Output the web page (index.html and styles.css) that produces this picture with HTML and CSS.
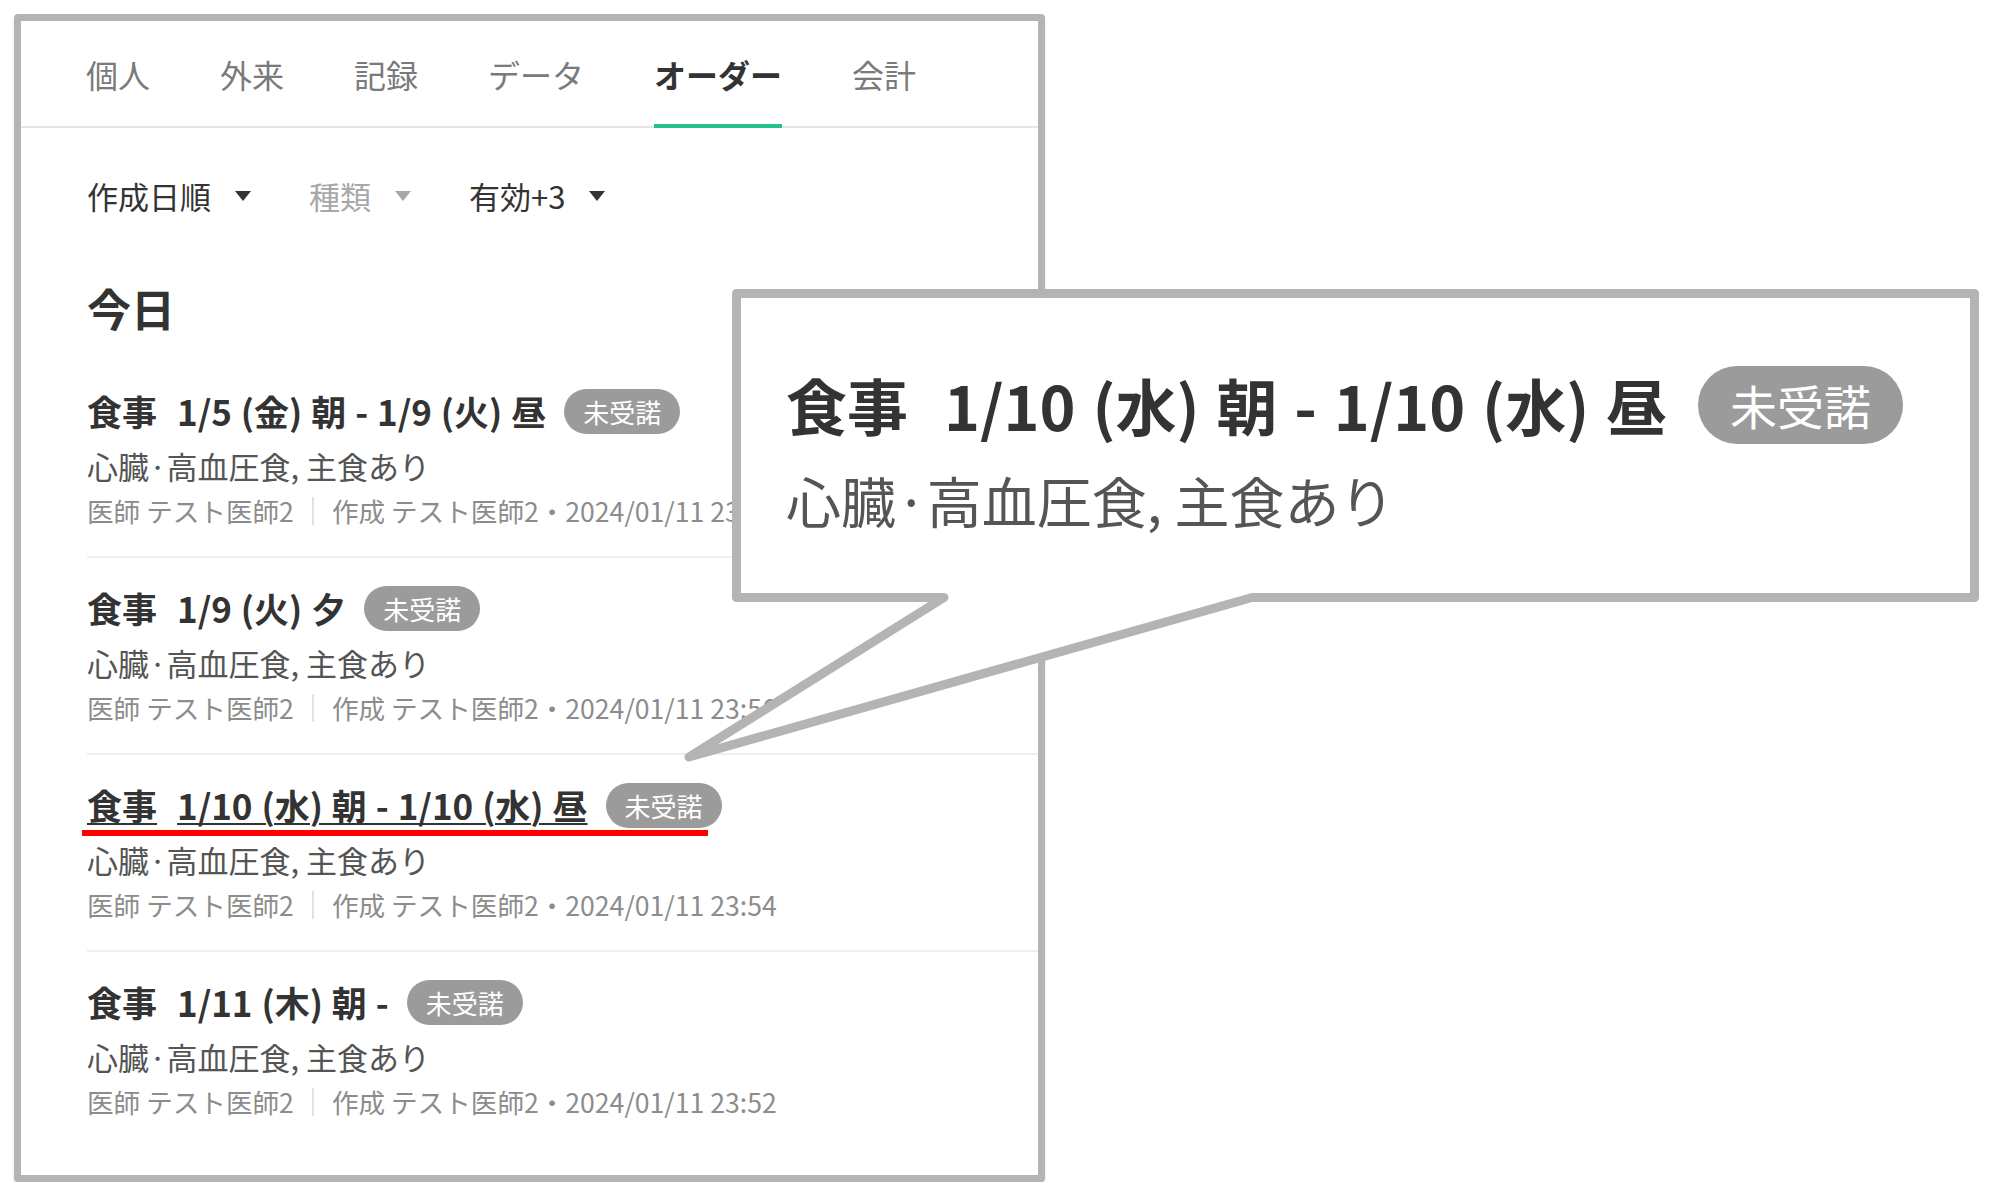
FILE: index.html
```html
<!DOCTYPE html>
<html lang="ja">
<head>
  <meta charset="UTF-8" />
  <meta name="viewport" content="width=device-width, initial-scale=1.0"/>
  <title>オーダー</title>
  <link rel="stylesheet" href="styles.css">
</head>
<body>
  <div class="panel">
    <nav class="tabs">
      <a class="tab">個人</a>
      <a class="tab">外来</a>
      <a class="tab">記録</a>
      <a class="tab">データ</a>
      <a class="tab active">オーダー</a>
      <a class="tab">会計</a>
    </nav>

    <div class="filters">
      <button class="filter">作成日順<span class="caret"></span></button>
      <button class="filter disabled">種類<span class="caret"></span></button>
      <button class="filter">有効+3<span class="caret"></span></button>
    </div>

    <h2 class="day">今日</h2>

    <ul class="orders">
      <li class="order">
        <div class="order-head">
          <a class="order-title"><span class="kind">食事</span>1/5 (金) 朝 - 1/9 (火) 昼</a>
          <span class="badge">未受諾</span>
        </div>
        <div class="order-detail">心臓·高血圧食, 主食あり</div>
        <div class="order-meta">
          <span>医師 テスト医師2</span><span class="sep"></span><span>作成 テスト医師2・2024/01/11 23:58</span>
        </div>
      </li>
      <li class="order">
        <div class="order-head">
          <a class="order-title"><span class="kind">食事</span>1/9 (火) 夕</a>
          <span class="badge">未受諾</span>
        </div>
        <div class="order-detail">心臓·高血圧食, 主食あり</div>
        <div class="order-meta">
          <span>医師 テスト医師2</span><span class="sep"></span><span>作成 テスト医師2・2024/01/11 23:56</span>
        </div>
      </li>
      <li class="order">
        <div class="order-head marked">
          <a class="order-title hover"><span class="kind">食事</span>1/10 (水) 朝 - 1/10 (水) 昼</a>
          <span class="badge">未受諾</span>
        </div>
        <div class="order-detail">心臓·高血圧食, 主食あり</div>
        <div class="order-meta">
          <span>医師 テスト医師2</span><span class="sep"></span><span>作成 テスト医師2・2024/01/11 23:54</span>
        </div>
      </li>
      <li class="order">
        <div class="order-head">
          <a class="order-title"><span class="kind">食事</span>1/11 (木) 朝 -</a>
          <span class="badge">未受諾</span>
        </div>
        <div class="order-detail">心臓·高血圧食, 主食あり</div>
        <div class="order-meta">
          <span>医師 テスト医師2</span><span class="sep"></span><span>作成 テスト医師2・2024/01/11 23:52</span>
        </div>
      </li>
    </ul>
  </div>

  <!-- zoomed callout of the third order -->
  <div class="callout">
    <svg class="callout-shape" width="1247" height="313" viewBox="0 0 1247 313">
      <path d="M4.5 4.5 H1242.5 V308.5 H520 L-43 468 L212 308.5 H4.5 Z" />
    </svg>
    <div class="callout-body">
      <div class="order-head">
        <span class="order-title"><span class="kind">食事</span>1/10 (水) 朝 - 1/10 (水) 昼</span>
        <span class="badge">未受諾</span>
      </div>
      <div class="order-detail">心臓·高血圧食, 主食あり</div>
    </div>
  </div>
</body>
</html>
```

FILE: styles.css
```css
body {
  margin: 0;
  background: #fff;
  font-family: "Noto Sans CJK JP", "Noto Sans", sans-serif;
  color: #333;
}

.panel {
  box-sizing: border-box;
  width: 1031px;
  height: 1168px;
  margin: 14px 0 0 14px;
  border: 7px solid #b4b4b4;
  border-radius: 4px;
  box-shadow: 0 2px 3px rgba(0, 0, 0, 0.12);
  background: #fff;
  overflow: hidden;
}

/* Tabs */
.tabs {
  display: flex;
  gap: 70px;
  padding-left: 65px;
  border-bottom: 2px solid #e6e6e6;
}

.tab {
  padding: 31px 0 28px;
  margin-bottom: -2px;
  border-bottom: 4px solid transparent;
  font-size: 32px;
  line-height: 44px;
  color: #7a7a7a;
}

.tab.active {
  color: #333;
  font-weight: 700;
  border-bottom-color: #22c08a;
}

/* Filters */
.filters {
  display: flex;
  gap: 58px;
  padding: 46px 0 0 66px;
}

.filter {
  display: flex;
  align-items: center;
  padding: 0;
  border: none;
  background: none;
  font-family: inherit;
  font-size: 31px;
  line-height: 44px;
  color: #333;
}

.caret {
  margin-left: 24px;
  border-left: 8px solid transparent;
  border-right: 8px solid transparent;
  border-top: 10px solid #333;
}

.filter.disabled {
  color: #a8a8a8;
}

.filter.disabled .caret {
  border-top-color: #a8a8a8;
}

.day {
  margin: 60px 0 23px 66px;
  font-size: 44px;
  line-height: 60px;
  font-weight: 700;
  color: #333;
}

/* Order list */
.orders {
  list-style: none;
  margin: 0 0 0 66px;
  padding: 0;
}

.order {
  padding: 27px 0;
  border-bottom: 2px solid #efefef;
}

.order:last-child {
  border-bottom: none;
}

.order-head {
  display: flex;
  align-items: center;
  height: 46px;
  position: relative;
}

.order-title {
  font-size: 35px;
  line-height: 46px;
  font-weight: 700;
  word-spacing: 1px;
  color: #333;
  white-space: nowrap;
}

.order-title.hover {
  text-decoration: underline;
  text-decoration-thickness: 2px;
  text-underline-offset: 3px;
}

.kind {
  margin-right: 20px;
}

.badge {
  margin-left: 18px;
  padding: 0 19px;
  height: 45px;
  border-radius: 23px;
  background: #9b9b9b;
  color: #fff;
  font-size: 26px;
  line-height: 45px;
  white-space: nowrap;
}

/* red mark drawn under the selected order */
.order-head.marked::after {
  content: "";
  position: absolute;
  left: -5px;
  top: 48px;
  width: 626px;
  height: 6px;
  background: #f00;
}

.order-detail {
  margin-top: 12px;
  font-size: 31px;
  line-height: 40px;
  color: #555;
}

.order-meta {
  display: flex;
  align-items: center;
  margin-top: 7px;
  font-size: 26.6px;
  line-height: 36px;
  color: #8c8c8c;
  white-space: nowrap;
}

.sep {
  width: 2px;
  height: 28px;
  margin: 0 18px;
  background: #e2e2e2;
}

/* Callout */
.callout {
  position: absolute;
  left: 732px;
  top: 289px;
  width: 1247px;
  height: 313px;
}

.callout-shape {
  position: absolute;
  left: 0;
  top: 0;
  overflow: visible;
}

.callout-shape path {
  fill: #fff;
  stroke: #b4b4b4;
  stroke-width: 9;
  stroke-linejoin: round;
}

.callout-body {
  position: relative;
  padding: 77px 0 0 54px;
}

.callout .order-head {
  height: 78px;
}

.callout .order-title {
  font-size: 61px;
  line-height: 78px;
  word-spacing: 3px;
}

.callout .kind {
  margin-right: 36px;
}

.callout .badge {
  margin-left: 31px;
  padding: 0 32px;
  height: 78px;
  border-radius: 39px;
  font-size: 47px;
  line-height: 78px;
}

.callout .order-detail {
  margin-top: 25px;
  font-size: 55px;
  line-height: 60px;
}
```
